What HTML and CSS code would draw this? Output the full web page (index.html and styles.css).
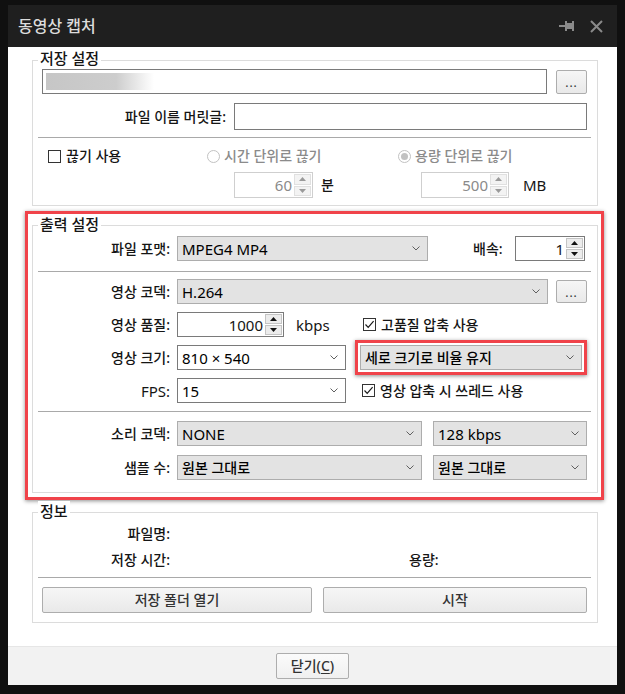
FILE: index.html
```html
<!DOCTYPE html>
<html lang="ko">
<head>
<meta charset="utf-8">
<title>동영상 캡처</title>
<link rel="stylesheet" href="styles.css">
</head>
<body>
<div class="window">
  <div class="titlebar">
    <span class="title">동영상 캡처</span>
    <div class="tb-icons">
      <svg class="pin" width="16" height="10" viewBox="0 0 16 10"><rect x="0" y="4" width="6" height="2" fill="#8a8a8a"/><rect x="6" y="0" width="2" height="10" fill="#8a8a8a"/><rect x="8" y="2" width="5" height="6" fill="#8a8a8a"/><rect x="13" y="0" width="2" height="10" fill="#8a8a8a"/></svg>
      <svg class="close" width="13" height="13" viewBox="0 0 13 13"><path d="M1 1 L12 12 M12 1 L1 12" stroke="#8a8a8a" stroke-width="2"/></svg>
    </div>
  </div>

  <div class="content">
    <section class="group g1">
      <div class="gtitle">저장 설정</div>
      <div class="row ra">
        <div class="textbox path"><span class="blur"></span></div>
        <div class="btn dots">...</div>
      </div>
      <div class="row rb">
        <span class="lbl lw1">파일 이름 머릿글:</span>
        <div class="textbox prefix"></div>
      </div>
      <div class="sep"></div>
      <div class="row rc">
        <span class="check cw"><span class="box"></span>끊기 사용</span>
        <span class="radio dis rw"><span class="circle"></span>시간 단위로 끊기</span>
        <span class="radio dis on"><span class="circle"></span>용량 단위로 끊기</span>
      </div>
      <div class="row rd">
        <div class="spin dis s60"><span class="v">60</span><span class="arrows"><span class="ab"><svg width="7" height="4" viewBox="0 0 7 4"><path d="M0 4 L3.5 0 L7 4Z" fill="#9a9a9a"/></svg></span><span class="ab"><svg width="7" height="4" viewBox="0 0 7 4"><path d="M0 0 L3.5 4 L7 0Z" fill="#9a9a9a"/></svg></span></span></div>
        <span class="unit u-min">분</span>
        <div class="spin dis s500"><span class="v">500</span><span class="arrows"><span class="ab"><svg width="7" height="4" viewBox="0 0 7 4"><path d="M0 4 L3.5 0 L7 4Z" fill="#9a9a9a"/></svg></span><span class="ab"><svg width="7" height="4" viewBox="0 0 7 4"><path d="M0 0 L3.5 4 L7 0Z" fill="#9a9a9a"/></svg></span></span></div>
        <span class="unit u-mb">MB</span>
      </div>
    </section>

    <div class="highlight">
      <section class="group g2">
        <div class="gtitle">출력 설정</div>
        <div class="row r1">
          <span class="lbl lw2">파일 포맷:</span>
          <div class="combo gray w-format"><span class="v">MPEG4 MP4</span><svg class="chev" width="8" height="5" viewBox="0 0 8 5"><path d="M0.5 0.5 L4 4 L7.5 0.5" fill="none" stroke="#606060"/></svg></div>
          <span class="lbl speed">배속:</span>
          <div class="spin s1"><span class="v">1</span><span class="arrows"><span class="ab"><svg width="7" height="4" viewBox="0 0 7 4"><path d="M0 4 L3.5 0 L7 4Z" fill="#111"/></svg></span><span class="ab"><svg width="7" height="4" viewBox="0 0 7 4"><path d="M0 0 L3.5 4 L7 0Z" fill="#111"/></svg></span></span></div>
        </div>
        <div class="sep s2a"></div>
        <div class="row r2">
          <span class="lbl lw2">영상 코덱:</span>
          <div class="combo gray w-codec"><span class="v">H.264</span><svg class="chev" width="8" height="5" viewBox="0 0 8 5"><path d="M0.5 0.5 L4 4 L7.5 0.5" fill="none" stroke="#606060"/></svg></div>
          <div class="btn dots dots2">...</div>
        </div>
        <div class="row r3">
          <span class="lbl lw2">영상 품질:</span>
          <div class="spin s1000"><span class="v">1000</span><span class="arrows"><span class="ab"><svg width="7" height="4" viewBox="0 0 7 4"><path d="M0 4 L3.5 0 L7 4Z" fill="#111"/></svg></span><span class="ab"><svg width="7" height="4" viewBox="0 0 7 4"><path d="M0 0 L3.5 4 L7 0Z" fill="#111"/></svg></span></span></div>
          <span class="unit u-kbps">kbps</span>
          <span class="check"><span class="box"><svg width="11" height="11" viewBox="0 0 11 11"><path d="M1.5 5.5 L4.2 8.3 L9.6 2.2" fill="none" stroke="#1a1a1a" stroke-width="1.2"/></svg></span>고품질 압축 사용</span>
        </div>
        <div class="row r4">
          <span class="lbl lw2">영상 크기:</span>
          <div class="combo white w-size"><span class="v">810 × 540</span><svg class="chev" width="8" height="5" viewBox="0 0 8 5"><path d="M0.5 0.5 L4 4 L7.5 0.5" fill="none" stroke="#606060"/></svg></div>
          <div class="hl-small">
            <div class="combo gray w-ratio"><span class="v ko">세로 크기로 비율 유지</span><svg class="chev" width="8" height="5" viewBox="0 0 8 5"><path d="M0.5 0.5 L4 4 L7.5 0.5" fill="none" stroke="#606060"/></svg></div>
          </div>
        </div>
        <div class="row r5">
          <span class="lbl lw2 fps">FPS:</span>
          <div class="combo white w-size"><span class="v">15</span><svg class="chev" width="8" height="5" viewBox="0 0 8 5"><path d="M0.5 0.5 L4 4 L7.5 0.5" fill="none" stroke="#606060"/></svg></div>
          <span class="check ck2"><span class="box"><svg width="11" height="11" viewBox="0 0 11 11"><path d="M1.5 5.5 L4.2 8.3 L9.6 2.2" fill="none" stroke="#1a1a1a" stroke-width="1.2"/></svg></span>영상 압축 시 쓰레드 사용</span>
        </div>
        <div class="sep s2b"></div>
        <div class="row r6">
          <span class="lbl lw2">소리 코덱:</span>
          <div class="combo gray w-audio"><span class="v">NONE</span><svg class="chev" width="8" height="5" viewBox="0 0 8 5"><path d="M0.5 0.5 L4 4 L7.5 0.5" fill="none" stroke="#606060"/></svg></div>
          <div class="combo gray w-audio2"><span class="v">128 kbps</span><svg class="chev" width="8" height="5" viewBox="0 0 8 5"><path d="M0.5 0.5 L4 4 L7.5 0.5" fill="none" stroke="#606060"/></svg></div>
        </div>
        <div class="row r7">
          <span class="lbl lw2">샘플 수:</span>
          <div class="combo gray w-audio"><span class="v ko">원본 그대로</span><svg class="chev" width="8" height="5" viewBox="0 0 8 5"><path d="M0.5 0.5 L4 4 L7.5 0.5" fill="none" stroke="#606060"/></svg></div>
          <div class="combo gray w-audio2"><span class="v ko">원본 그대로</span><svg class="chev" width="8" height="5" viewBox="0 0 8 5"><path d="M0.5 0.5 L4 4 L7.5 0.5" fill="none" stroke="#606060"/></svg></div>
        </div>
      </section>
    </div>

    <section class="group g3">
      <div class="gtitle">정보</div>
      <div class="row i1">
        <span class="lbl lw2">파일명:</span>
      </div>
      <div class="row i2">
        <span class="lbl lw2">저장 시간:</span>
        <span class="lbl size-lbl">용량:</span>
      </div>
      <div class="sep s3"></div>
      <div class="row i3">
        <div class="btn big open">저장 폴더 열기</div>
        <div class="btn big start">시작</div>
      </div>
    </section>
  </div>

  <div class="footer">
    <div class="btn closebtn">닫기(<u>C</u>)</div>
  </div>
</div>
</body>
</html>
```

FILE: styles.css
```css
* { box-sizing: border-box; }
html, body { margin: 0; padding: 0; }
body {
  background: #101010;
  width: 625px;
  height: 694px;
  overflow: hidden;
  font-family: "Noto Sans", "Noto Sans CJK KR", sans-serif;
  font-size: 14px;
  font-weight: 400;
  line-height: 18px;
  color: #151515;
}
.window { margin: 5px 0 0 8px; width: 609px; }

.titlebar {
  height: 42px;
  background: #1f1f1f;
  display: flex;
  align-items: center;
  padding: 0 14px 0 10px;
  color: #dcdcdc;
  font-size: 16px;
  font-weight: 500;
}
.title { flex: 1; }
.tb-icons { display: flex; align-items: center; gap: 15px; }
.tb-icons svg { display: block; }

.content { background: #fff; padding: 13px 19px 23px 24px; }

.group { border: 1px solid #dcdcdc; padding: 0 10px 0 9px; }
.gtitle {
  display: table;
  margin: -12px 0 0 -4px;
  padding: 0 2px;
  background: #fff;
  line-height: 20px;
  font-size: 15px;
  font-weight: 500;
}
.g1 .gtitle { margin-top: -13px; }

.row { display: flex; align-items: center; }
.lbl { white-space: nowrap; font-weight: 500; }
.lw1 { width: 184px; text-align: right; margin-right: 8px; }
.lw2 { width: 128px; text-align: right; margin-right: 7px; flex: none; }

.sep { height: 1px; background: #a9a9a9; margin: 0 -4px; }

.textbox { background: #fff; border: 1px solid #7a7a7a; }
.path { width: 505px; height: 25px; padding: 3px; }
.blur {
  display: block;
  width: 108px;
  height: 17px;
  background: linear-gradient(to right, #c6c6c6, #cdcdcd 65%, #ffffff);
}
.prefix { width: 353px; height: 27px; }

.btn {
  background: linear-gradient(#f6f6f6, #e9e9e9);
  border: 1px solid #adadad;
  border-radius: 2px;
  display: flex;
  align-items: center;
  justify-content: center;
  color: #333;
  font-weight: 500;
}
.dots { width: 31px; height: 24px; margin-left: 9px; font-size: 12px; letter-spacing: 1px; padding-top: 3px; font-weight: 400; }
.dots2 { margin-left: 8px; height: 23px; }

.g1 .ra { margin-top: 1px; height: 25px; }
.g1 .rb { margin-top: 9px; height: 27px; }
.g1 .sep { margin-top: 7px; }
.g1 .rc { margin-top: 9px; height: 18px; padding-left: 6px; }
.g1 .rd { margin-top: 7px; height: 26px; padding-left: 192px; }
.g1 { padding-bottom: 7px; }

.check { display: flex; align-items: center; white-space: nowrap; font-weight: 500; }
.check .box {
  width: 13px; height: 13px;
  border: 1px solid #333;
  background: #fff;
  margin-right: 5px;
  display: flex; align-items: center; justify-content: center;
}
.check .box svg { display: block; }
.cw { width: 159px; }
.radio { display: flex; align-items: center; white-space: nowrap; font-weight: 500; }
.radio .circle {
  width: 13px; height: 13px;
  border-radius: 50%;
  border: 1px solid #c2c2c2;
  background: #fff;
  margin-right: 4px;
  display: flex; align-items: center; justify-content: center;
}
.radio.on .circle::after {
  content: "";
  width: 7px; height: 7px;
  border-radius: 50%;
  background: #c2c2c2;
}
.radio.dis { color: #8b8b8b; }
.rw { width: 191px; }

.spin {
  display: flex;
  align-items: stretch;
  background: #fff;
  border: 1px solid #7a7a7a;
  height: 100%;
}
.spin .v { flex: 1; text-align: right; padding-right: 2px; align-self: center; font-size: 15px; }
.spin .arrows { display: flex; flex-direction: column; width: 18px; padding: 1px 1px 1px 0; gap: 1px; }
.spin .ab {
  flex: 1;
  background: #ececec;
  border: 1px solid #c4c4c4;
  display: flex; align-items: center; justify-content: center;
}
.spin .ab svg { display: block; }
.spin.dis { border-color: #cfcfcf; color: #8a8a8a; }
.spin.dis .ab { background: #f3f3f3; border-color: #e0e0e0; }
.s60 { width: 79px; }
.s500 { width: 88px; }
.unit { white-space: nowrap; font-size: 15px; }
.u-min { margin-left: 8px; width: 100px; font-size: 14px; font-weight: 500; }
.u-mb { margin-left: 14px; }

.highlight {
  margin: 5px -6px 0 -7px;
  border: 3px solid #f0434a;
  padding: 11px 3px 4px 4px;
  box-shadow: 0 1px 4px rgba(0, 0, 0, 0.45);
}
.g2 { padding-bottom: 12px; }
.g2 .r1 { margin-top: 2px; height: 25px; }
.g2 .s2a { margin-top: 10px; }
.g2 .r2 { margin-top: 7px; height: 25px; }
.g2 .r3 { margin-top: 8px; height: 25px; }
.g2 .r4 { margin-top: 3px; height: 35px; }
.g2 .r5 { margin-top: 3px; height: 25px; }
.g2 .s2b { margin-top: 8px; }
.g2 .r6 { margin-top: 9px; height: 25px; }
.g2 .r7 { margin-top: 9px; height: 25px; }

.combo {
  height: 25px;
  display: flex;
  align-items: center;
  padding: 0 7px 0 4px;
  flex: none;
}
.combo .v { flex: 1; white-space: nowrap; font-size: 15px; color: #000; }
.combo .v.ko { font-size: 14px; font-weight: 500; }
.combo .chev { display: block; }
.combo.gray { background: #e3e3e3; border: 1px solid #adadad; }
.combo.white { background: #fff; border: 1px solid #7a7a7a; }
.w-format { width: 251px; }
.speed { margin-left: 45px; width: 32px; }
.s1 { width: 70px; margin-left: 10px; }
.w-codec { width: 371px; }
.s1000 { width: 107px; }
.u-kbps { margin-left: 12px; width: 67px; }
.w-size { width: 169px; }
.hl-small {
  margin-left: 9px;
  width: 238px;
  height: 35px;
  border: 3px solid #f0434a;
  padding: 2px;
  box-shadow: 0 1px 4px rgba(0, 0, 0, 0.45);
}
.w-ratio { width: 100%; }
.fps { font-size: 15px; font-weight: 400; }
.ck2 { margin-left: 16px; }
.w-audio { width: 245px; }
.w-audio2 { width: 154px; margin-left: 11px; }

.g3 { margin-top: 12px; padding-bottom: 9px; }
.g3 .i1 { margin-top: 4px; height: 18px; }
.g3 .i2 { margin-top: 8px; height: 18px; }
.size-lbl { margin-left: 232px; }
.g3 .s3 { margin-top: 8px; }
.g3 .i3 { margin-top: 9px; height: 26px; }
.big { height: 26px; color: #333; }
.open { width: 271px; }
.start { width: 265px; margin-left: 11px; }

.footer {
  background: #f2f2f2;
  border-top: 1px solid #e6e6e6;
  padding: 6px 0;
  display: flex;
  justify-content: center;
}
.closebtn { width: 73px; height: 26px; background: linear-gradient(#fbfbfb, #f0f0f0); }
.closebtn u { text-decoration: underline; text-underline-offset: 2px; }
```
